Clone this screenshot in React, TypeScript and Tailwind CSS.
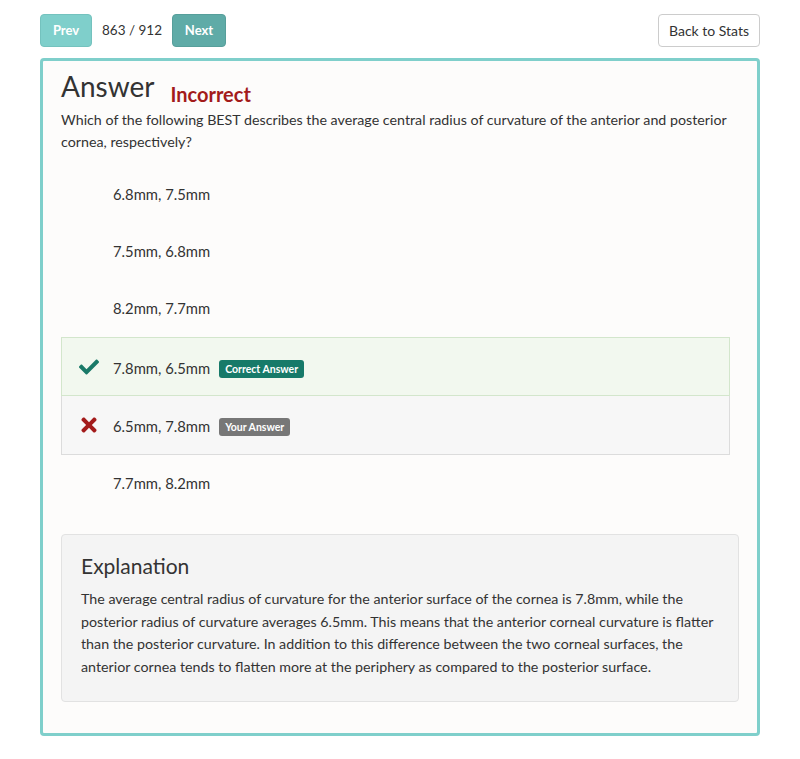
import { FaCheck, FaTimes } from "react-icons/fa";

const options = [
  { text: "6.8mm, 7.5mm" },
  { text: "7.5mm, 6.8mm" },
  { text: "8.2mm, 7.7mm" },
  { text: "7.8mm, 6.5mm", kind: "correct" },
  { text: "6.5mm, 7.8mm", kind: "yours" },
  { text: "7.7mm, 8.2mm" },
];

function Option({ text, kind }: { text: string; kind?: string }) {
  let rowCls = "h-[57px] border border-transparent";
  if (kind === "correct") rowCls = "h-[59px] border border-[#d3e6cc] bg-[#f2f8ef]";
  if (kind === "yours") rowCls = "h-[59px] border border-[#dcdcdc] border-t-0 bg-[#f7f7f7]";
  return (
    <div className={`flex items-center w-[669px] pl-[17px] ${rowCls}`}>
      <div className="w-[34px] flex items-center">
        {kind === "correct" && <FaCheck className="text-[#1a7a68] text-[20px]" />}
        {kind === "yours" && <FaTimes className="text-[#a31b1b] text-[22px] -ml-[1px]" />}
      </div>
      <span className={`text-[14.8px] text-[#333] ${kind ? "mt-[3px]" : ""}`}>{text}</span>
      {kind === "correct" && (
        <span className="ml-[9px] mt-[4px] bg-[#177a69] text-white text-[10.5px] font-bold px-[6px] py-[2px] rounded-[3px] leading-[14px]">
          Correct Answer
        </span>
      )}
      {kind === "yours" && (
        <span className="ml-[9px] mt-[4px] bg-[#777] text-white text-[10.5px] font-bold px-[6px] py-[2px] rounded-[3px] leading-[14px]">
          Your Answer
        </span>
      )}
    </div>
  );
}

export default function App() {
  return (
    <div className="min-h-[759px] bg-white px-[40px] pt-[14px] font-['Lato',sans-serif] text-[#333]">
      <div className="flex items-center justify-between">
        <div className="flex items-center">
          <button className="h-[33px] w-[52px] rounded-[4px] bg-[#7fcfcb] border border-[#74c2be] text-white text-[13px] font-bold">
            Prev
          </button>
          <span className="mx-[10px] text-[13.5px]">863 / 912</span>
          <button className="h-[33px] w-[54px] rounded-[4px] bg-[#5faba7] border border-[#579f9b] text-white text-[13px] font-bold">
            Next
          </button>
        </div>
        <button className="h-[33px] w-[102px] rounded-[4px] bg-white border border-[#ccc] text-[14px]">
          Back to Stats
        </button>
      </div>

      <div className="mt-[11px] border-[3px] border-[#7fcfcb] rounded-[4px] bg-[#fdfcfb] px-[18px] pt-[6px] pb-[31px]">
        <div className="flex items-end">
          <h1 className="text-[28px] leading-[38px] text-[#333]">Answer</h1>
          <span className="ml-[16px] mb-[-4px] text-[20px] font-bold text-[#a31b1b]">Incorrect</span>
        </div>
        <p className="mt-[4px] text-[14.25px] leading-[22px] pr-[8px]">
          Which of the following BEST describes the average central radius of curvature of the anterior and posterior
          cornea, respectively?
        </p>
        <div className="mt-[13px]">
          {options.map((o, i) => (
            <Option key={i} text={o.text} kind={o.kind} />
          ))}
        </div>
        <div className="mt-[22px] bg-[#f4f4f4] border border-[#e2e2e2] rounded-[4px] px-[19px] pt-[17px] pb-[23px]">
          <h2 className="text-[21px] leading-[28px] mb-[8px]">Explanation</h2>
          <p className="text-[14.25px] leading-[22.5px]">
            The average central radius of curvature for the anterior surface of the cornea is 7.8mm, while the
            posterior radius of curvature averages 6.5mm. This means that the anterior corneal curvature is flatter
            than the posterior curvature. In addition to this difference between the two corneal surfaces, the
            anterior cornea tends to flatten more at the periphery as compared to the posterior surface.
          </p>
        </div>
      </div>
    </div>
  );
}
